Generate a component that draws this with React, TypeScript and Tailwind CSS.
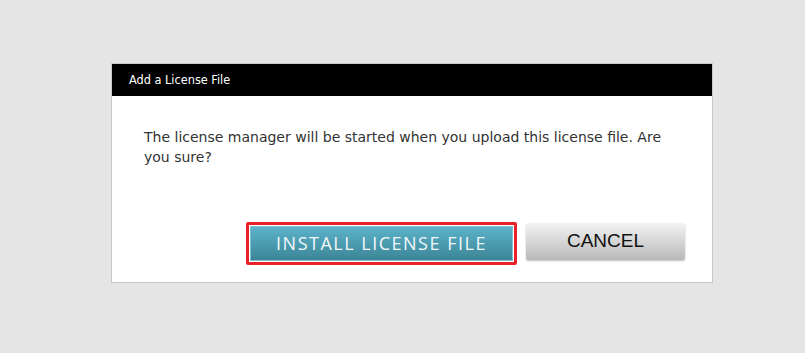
const App = () => {
  return (
    <div className="h-[353px] w-[805px] overflow-hidden bg-[#e5e5e5] pl-[111px] pt-[63px]">
      <div
        role="dialog"
        aria-labelledby="license-dialog-title"
        className="flex h-[220px] w-[602px] flex-col border border-[#c8c8c8] bg-white"
      >
        <div className="flex h-[32px] items-center bg-black pl-[17px]">
          <h2
            id="license-dialog-title"
            className="text-[12.6px] text-white [font-family:'DejaVu_Sans_Condensed','DejaVu_Sans',sans-serif]"
          >
            Add a License File
          </h2>
        </div>

        <p className="pl-[32px] pr-[40px] pt-[31px] text-[14px] leading-[20px] text-[#333] [font-family:'DejaVu_Sans',sans-serif]">
          The license manager will be started when you upload this license file. Are you sure?
        </p>

        <div className="mt-auto flex items-start justify-end gap-[9px] pb-[17px] pr-[27px]">
          <div className="rounded-[2px] border-[3px] border-[#e8202a] bg-white p-px">
            <button
              type="button"
              className="flex h-[35px] w-[263px] items-center justify-center border border-[#7fc0d2] bg-gradient-to-b from-[#5bb3ca] to-[#3d8597] text-[18px] tracking-[1.5px] text-[#f2f8fa] [font-family:'Open_Sans',sans-serif]"
            >
              INSTALL LICENSE FILE
            </button>
          </div>
          <button
            type="button"
            className="mt-px flex h-[37px] w-[159px] items-center justify-center rounded-[2px] bg-gradient-to-b from-[#f4f4f4] to-[#b9b9b9] text-[19px] text-[#111] shadow-[0_1px_2px_rgba(0,0,0,0.25)] [font-family:'Liberation_Sans',Arial,sans-serif]"
          >
            CANCEL
          </button>
        </div>
      </div>
    </div>
  );
};

export default App;
